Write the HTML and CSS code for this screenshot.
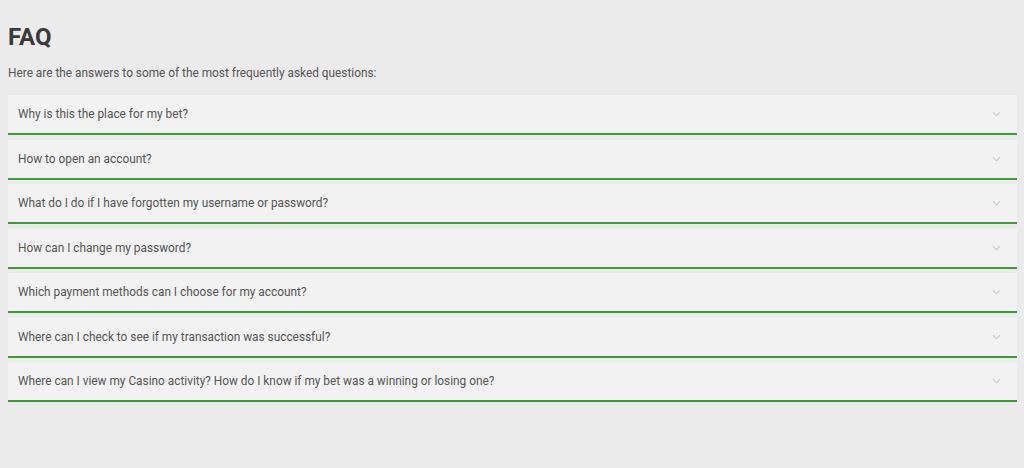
FILE: index.html
```html
<!DOCTYPE html>
<html lang="en">
<head>
<meta charset="utf-8">
<title>FAQ</title>
<link rel="stylesheet" href="styles.css">
</head>
<body>
<main class="faq">
  <h1 class="faq-title">FAQ</h1>
  <p class="faq-intro">Here are the answers to some of the most frequently asked questions:</p>
  <ul class="faq-list">
    <li class="faq-item"><span class="faq-q">Why is this the place for my bet?</span><svg class="chev" viewBox="0 0 10 6" width="9" height="6"><path d="M1 1l4 4 4-4" fill="none" stroke="#c8c8c8" stroke-width="1.2"/></svg></li>
    <li class="faq-item"><span class="faq-q">How to open an account?</span><svg class="chev" viewBox="0 0 10 6" width="9" height="6"><path d="M1 1l4 4 4-4" fill="none" stroke="#c8c8c8" stroke-width="1.2"/></svg></li>
    <li class="faq-item"><span class="faq-q">What do I do if I have forgotten my username or password?</span><svg class="chev" viewBox="0 0 10 6" width="9" height="6"><path d="M1 1l4 4 4-4" fill="none" stroke="#c8c8c8" stroke-width="1.2"/></svg></li>
    <li class="faq-item"><span class="faq-q">How can I change my password?</span><svg class="chev" viewBox="0 0 10 6" width="9" height="6"><path d="M1 1l4 4 4-4" fill="none" stroke="#c8c8c8" stroke-width="1.2"/></svg></li>
    <li class="faq-item"><span class="faq-q">Which payment methods can I choose for my account?</span><svg class="chev" viewBox="0 0 10 6" width="9" height="6"><path d="M1 1l4 4 4-4" fill="none" stroke="#c8c8c8" stroke-width="1.2"/></svg></li>
    <li class="faq-item"><span class="faq-q">Where can I check to see if my transaction was successful?</span><svg class="chev" viewBox="0 0 10 6" width="9" height="6"><path d="M1 1l4 4 4-4" fill="none" stroke="#c8c8c8" stroke-width="1.2"/></svg></li>
    <li class="faq-item"><span class="faq-q">Where can I view my Casino activity? How do I know if my bet was a winning or losing one?</span><svg class="chev" viewBox="0 0 10 6" width="9" height="6"><path d="M1 1l4 4 4-4" fill="none" stroke="#c8c8c8" stroke-width="1.2"/></svg></li>
  </ul>
</main>
</body>
</html>
```
FILE: styles.css
```css
html, body {
  margin: 0;
  padding: 0;
  background: #ebebeb;
}
body {
  font-family: Roboto, "Liberation Sans", Arial, sans-serif;
  color: #555;
}
.faq {
  padding: 23px 7px 0 8px;
}
.faq-title {
  margin: 0;
  font-size: 24px;
  line-height: 28px;
  font-weight: 700;
  color: #3a3a3a;
}
.faq-intro {
  margin: 14px 0 0;
  font-size: 11.85px;
  line-height: 16px;
  color: #555;
}
.faq-list {
  list-style: none;
  margin: 14px 0 0;
  padding: 0;
  display: flex;
  flex-direction: column;
  gap: 4.5px;
}
.faq-item {
  height: 38px;
  box-sizing: content-box;
  background: #f2f2f2;
  border-bottom: 2px solid #3f9a3a;
  display: flex;
  align-items: center;
  justify-content: space-between;
  padding: 0 16px 0 10px;
}
.faq-q {
  font-size: 11.85px;
  color: #555;
}
.chev {
  display: block;
}
```
